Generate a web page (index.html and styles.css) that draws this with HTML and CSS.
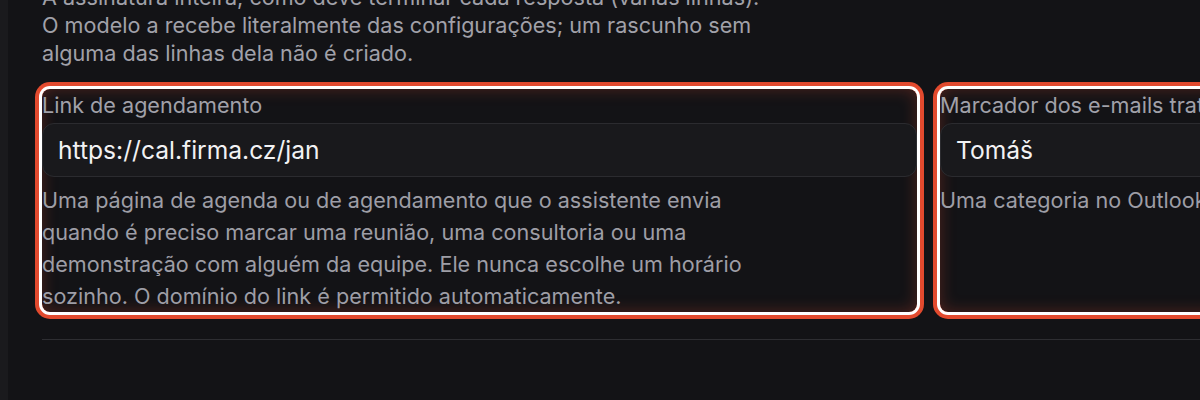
FILE: index.html
```html
<!DOCTYPE html>
<html lang="pt">
<head>
<meta charset="utf-8">
<link rel="stylesheet" href="styles.css">
</head>
<body>
<div class="page">
  <div class="rail"></div>
  <main class="main">
    <p class="intro">A assinatura inteira, como deve terminar cada resposta (várias linhas).<br>O modelo a recebe literalmente das configurações; um rascunho sem alguma das linhas dela não é criado.</p>
    <div class="fields">
      <div class="field highlighted">
        <label class="label">Link de agendamento</label>
        <div class="input">https://cal.firma.cz/jan</div>
        <p class="help">Uma página de agenda ou de agendamento que o assistente envia quando é preciso marcar uma reunião, uma consultoria ou uma demonstração com alguém da equipe. Ele nunca escolhe um horário sozinho. O domínio do link é permitido automaticamente.</p>
      </div>
      <div class="field highlighted">
        <label class="label">Marcador dos e-mails tratados</label>
        <div class="input">Tomáš</div>
        <p class="help">Uma categoria no Outlook</p>
      </div>
    </div>
    <hr class="divider">
  </main>
</div>
</body>
</html>
```

FILE: styles.css
```css
html, body {
  margin: 0;
  padding: 0;
  background: #131316;
  overflow: hidden;
  height: 400px;
}

body {
  font-family: Inter, "Noto Sans", sans-serif;
  color: #a1a1a9;
}

.page {
  display: flex;
  min-height: 400px;
}

.rail {
  width: 8px;
  flex: none;
  background: #1a1a1d;
}

.main {
  flex: 1;
  padding-left: 34px;
  margin-top: -17px;
  min-width: 0;
}

.intro {
  margin: 0;
  max-width: 770px;
  font-size: 21.6px;
  line-height: 28px;
  color: #a1a1a9;
}

.fields {
  display: grid;
  grid-template-columns: 875px 875px;
  column-gap: 23px;
  margin-top: 22px;
}

.field {
  display: flex;
  flex-direction: column;
  border-radius: 8px;
}

.highlighted {
  box-shadow:
    0 0 0 3px #ffffff,
    0 0 0 7px #e24a2e,
    inset 0 0 16px rgba(226, 74, 46, 0.3);
}

.label {
  display: block;
  padding-top: 3px;
  margin-bottom: 5px;
  font-size: 21.6px;
  line-height: 26px;
  color: #a1a1a9;
}

.input {
  height: 54px;
  box-sizing: border-box;
  display: flex;
  align-items: center;
  padding: 0 15px;
  border: 1px solid #2b2b2f;
  border-radius: 12px;
  background: #19191c;
  font-size: 24.6px;
  color: #f2f2f4;
}

.help {
  margin: 7px 0 0;
  max-width: 730px;
  font-size: 21.6px;
  line-height: 32px;
  color: #9e9ea6;
}

.divider {
  margin: 27px 0 0;
  border: 0;
  height: 1px;
  background: #2e2e32;
}
```
